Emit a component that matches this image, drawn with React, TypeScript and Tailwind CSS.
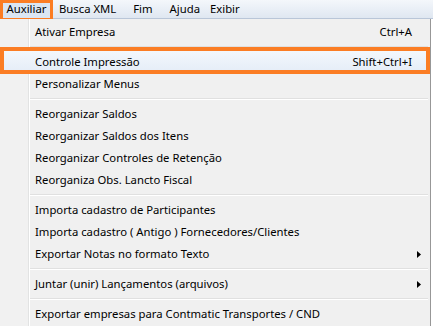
import React from "react";

type Item =
  | { kind: "item"; label: string; shortcut?: string; sub?: boolean; boxed?: boolean }
  | { kind: "sep" };

const items: Item[] = [
  { kind: "item", label: "Ativar Empresa", shortcut: "Ctrl+A" },
  { kind: "sep" },
  { kind: "item", label: "Controle Impressão", shortcut: "Shift+Ctrl+I", boxed: true },
  { kind: "item", label: "Personalizar Menus" },
  { kind: "sep" },
  { kind: "item", label: "Reorganizar Saldos" },
  { kind: "item", label: "Reorganizar Saldos dos Itens" },
  { kind: "item", label: "Reorganizar Controles de Retenção" },
  { kind: "item", label: "Reorganiza Obs. Lancto Fiscal" },
  { kind: "sep" },
  { kind: "item", label: "Importa cadastro de Participantes" },
  { kind: "item", label: "Importa cadastro ( Antigo ) Fornecedores/Clientes" },
  { kind: "item", label: "Exportar Notas no formato Texto", sub: true },
  { kind: "sep" },
  { kind: "item", label: "Juntar (unir) Lançamentos (arquivos)", sub: true },
  { kind: "sep" },
  { kind: "item", label: "Exportar empresas para Contmatic Transportes / CND" },
];

function Arrow() {
  return (
    <svg width="4" height="7" viewBox="0 0 4 7" className="block">
      <path d="M0 0 L4 3.5 L0 7 Z" fill="#000" />
    </svg>
  );
}

export default function App() {
  return (
    <div
      className="w-[433px] h-[326px] overflow-hidden bg-white text-[11.3px] text-black relative"
      style={{ fontFamily: '"Segoe UI", "Noto Sans", "Open Sans", sans-serif' }}
    >
      {/* menubar */}
      <div className="h-[19px] flex items-center bg-gradient-to-b from-[#f4f7fb] to-[#dfe7f1] border-b border-[#b9c6d8] relative">
        <div className="relative h-[19px] w-[53px] shrink-0 flex items-center justify-center bg-[#dbe6f3]">
          <span className="leading-none">Auxiliar</span>
          <div className="absolute left-0 top-0 w-[53px] h-[21px] border-[3px] border-[#fb7d24]" />
        </div>
        <span className="ml-[6px] leading-none whitespace-nowrap">Busca XML</span>
        <span className="ml-[17px] leading-none">Fim</span>
        <span className="ml-[17px] leading-none">Ajuda</span>
        <span className="ml-[10px] leading-none">Exibir</span>
      </div>

      {/* dropdown */}
      <div className="w-[431px] bg-[#f0f0f0] border-r border-[#979797] py-[2px] relative">
        <div className="absolute left-0 top-0 bottom-0 w-[28px] bg-[#f1f1f1]" />
        <div className="absolute left-[28px] top-0 bottom-0 w-px bg-[#e2e3e3]" />
        <div className="absolute left-[29px] top-0 bottom-0 w-px bg-white" />
        {items.map((it, i) =>
          it.kind === "sep" ? (
            <div key={i} className="h-[8px] flex flex-col justify-center pl-[30px] pr-[2px] relative">
              <div className="h-px bg-[#e0e0e0]" />
              <div className="h-px bg-white" />
            </div>
          ) : (
            <div key={i} className="h-[22px] flex items-center relative">
              {it.boxed && (
                <div className="absolute left-[2px] right-[2px] top-0 bottom-0 bg-gradient-to-b from-[#f3f7fc] to-[#e4ecf7]" />
              )}
              <span className="relative pl-[35px] flex-1 whitespace-nowrap">{it.label}</span>
              {it.shortcut && (
                <span className="relative pr-[18px] whitespace-nowrap">{it.shortcut}</span>
              )}
              {it.sub && (
                <span className="relative pr-[9px]">
                  <Arrow />
                </span>
              )}
              {it.boxed && (
                <div className="absolute left-0 right-0 -top-[4px] -bottom-[1px] border-4 border-[#fb7d24]" />
              )}
            </div>
          )
        )}
      </div>
    </div>
  );
}
